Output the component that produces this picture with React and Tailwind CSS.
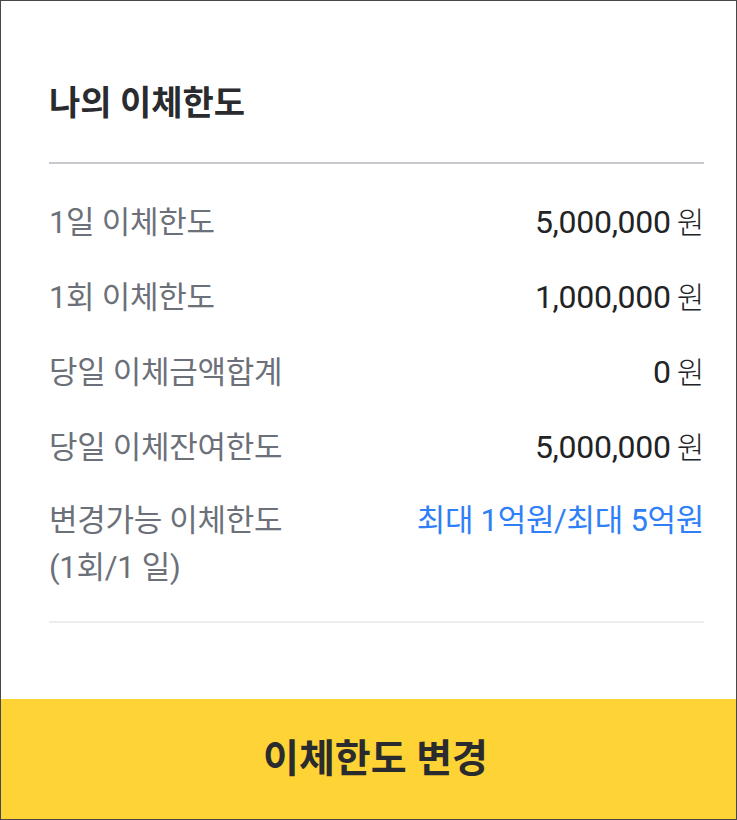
const font = { fontFamily: 'Roboto, "Noto Sans CJK KR", sans-serif' }

const rows = [
  { label: '1일 이체한도', value: '5,000,000' },
  { label: '1회 이체한도', value: '1,000,000' },
  { label: '당일 이체금액합계', value: '0' },
  { label: '당일 이체잔여한도', value: '5,000,000' },
]

function Row({ label, value }) {
  return (
    <div className="flex justify-between items-center">
      <span className="text-[31px] leading-[46px] text-[#6b7079] tracking-[-0.3px]">{label}</span>
      <span className="text-[32px] leading-[46px] text-[#222325] tracking-[-0.3px]">
        {value}
        <span className="ml-[6px] text-[30px] font-light">원</span>
      </span>
    </div>
  )
}

export default function App() {
  return (
    <div style={font} className="w-[737px] h-[820px] border border-[#474747] bg-white flex flex-col">
      <div className="pl-[48px] pr-[32px] flex-1 flex flex-col">
        <h1 className="pt-[80px] text-[34px] leading-[44px] font-bold text-[#2a2b2e]">나의 이체한도</h1>
        <div className="mt-[37px] h-[2px] bg-[#c6cacf]" />

        <div className="mt-[35px] flex flex-col gap-[28px]">
          {rows.map((r) => (
            <Row key={r.label} {...r} />
          ))}
          <div className="-mt-[2px] flex justify-between items-start">
            <span className="text-[31px] leading-[47px] text-[#6b7079] tracking-[-0.3px]">
              변경가능 이체한도
              <br />
              (1회/1 일)
            </span>
            <span className="text-[31px] leading-[47px] text-[#2f80f8] tracking-[-0.3px]">최대 1억원/최대 5억원</span>
          </div>
        </div>

        <div className="mt-[30px] h-[2px] bg-[#ebeef1]" />
      </div>

      <button className="h-[120px] w-full pl-[14px] bg-[#fdd335] text-[39px] font-bold text-[#2a2b2e]">
        이체한도 변경
      </button>
    </div>
  )
}
